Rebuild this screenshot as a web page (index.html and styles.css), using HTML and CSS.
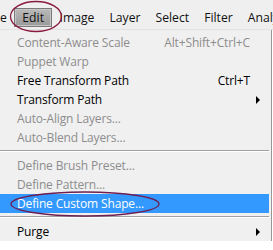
FILE: index.html
```html
<!DOCTYPE html>
<html>
<head>
<meta charset="utf-8">
<link rel="stylesheet" href="styles.css">
</head>
<body>
<div class="screen">
  <div class="menubar">
    <span class="mb-item mb-cut">e</span>
    <span class="mb-item mb-active">Edit</span>
    <span class="mb-item">Image</span>
    <span class="mb-item">Layer</span>
    <span class="mb-item">Select</span>
    <span class="mb-item">Filter</span>
    <span class="mb-item">Analy</span>
  </div>
  <div class="dropdown">
    <div class="item disabled"><span class="label">Content-Aware Scale</span><span class="shortcut">Alt+Shift+Ctrl+C</span></div>
    <div class="item disabled"><span class="label">Puppet Warp</span></div>
    <div class="item"><span class="label">Free Transform Path</span><span class="shortcut">Ctrl+T</span></div>
    <div class="item sub"><span class="label">Transform Path</span><span class="arrow"></span></div>
    <div class="item disabled"><span class="label">Auto-Align Layers...</span></div>
    <div class="item disabled"><span class="label">Auto-Blend Layers...</span></div>
    <div class="sep"></div>
    <div class="item disabled"><span class="label">Define Brush Preset...</span></div>
    <div class="item disabled"><span class="label">Define Pattern...</span></div>
    <div class="item hl"><span class="label">Define Custom Shape...</span></div>
    <div class="sep"></div>
    <div class="item sub"><span class="label">Purge</span><span class="arrow"></span></div>
  </div>
  <svg class="annot annot-edit" width="56" height="34" viewBox="0 0 56 34"><ellipse cx="27" cy="16.5" rx="25.5" ry="15" fill="none" stroke="#8a1a3e" stroke-width="1.3"/></svg>
  <svg class="annot annot-shape" width="154" height="30" viewBox="0 0 154 30"><ellipse cx="76" cy="14" rx="74" ry="12" fill="none" stroke="#6e1e52" stroke-width="1.3"/></svg>
</div>
</body>
</html>
```
FILE: styles.css
```css
html, body {
  margin: 0;
  padding: 0;
  background: #ffffff;
}
.screen {
  position: relative;
  width: 273px;
  height: 250px;
  overflow: hidden;
  font-family: "Open Sans", "Noto Sans", sans-serif;
  font-size: 12px;
}
.menubar {
  height: 30px;
  padding-top: 6px;
  background: #efefef;
  display: flex;
  align-items: center;
  white-space: nowrap;
  border-bottom: 1px solid #e2e2e2;
  box-sizing: border-box;
  font-size: 12.2px;
  color: #111;
}
.mb-item {
  padding: 0 7.5px;
  line-height: 17px;
  flex: none;
}
.mb-cut {
  margin-left: -7.5px;
  margin-right: 0;
}
.mb-active {
  background: linear-gradient(#b9b9b9, #9a9a9a);
  border: 1px solid #7a7a7a;
  box-shadow: inset 0 0 0 1px #c4c4c4;
  color: #111;
  padding: 0 7px;
}
.dropdown {
  width: 272px;
  background: #f0f0f0;
  border-right: 1px solid #979797;
  box-sizing: border-box;
  padding-top: 3px;
}
.item {
  height: 19px;
  display: flex;
  align-items: center;
  padding: 0 19px 0 17px;
  color: #000;
  white-space: nowrap;
  margin-right: 2px;
  letter-spacing: -0.15px;
}
.item .label {
  flex: 1;
}
.item.disabled {
  color: #8d8d8d;
}
.item.hl {
  background: #3399ff;
  color: #fff;
}
.shortcut {
  text-align: right;
}
.arrow {
  width: 0;
  height: 0;
  border-top: 4px solid transparent;
  border-bottom: 4px solid transparent;
  border-left: 4px solid #000;
  margin-right: -10px;
}
.sep {
  margin: 3px 2px 4px 0;
  border-top: 1px solid #a0a0a0;
  border-bottom: 1px solid #ffffff;
}
.annot {
  position: absolute;
}
.annot-edit {
  left: 9px;
  top: 0;
}
.annot-shape {
  left: 9px;
  top: 190px;
}
```
